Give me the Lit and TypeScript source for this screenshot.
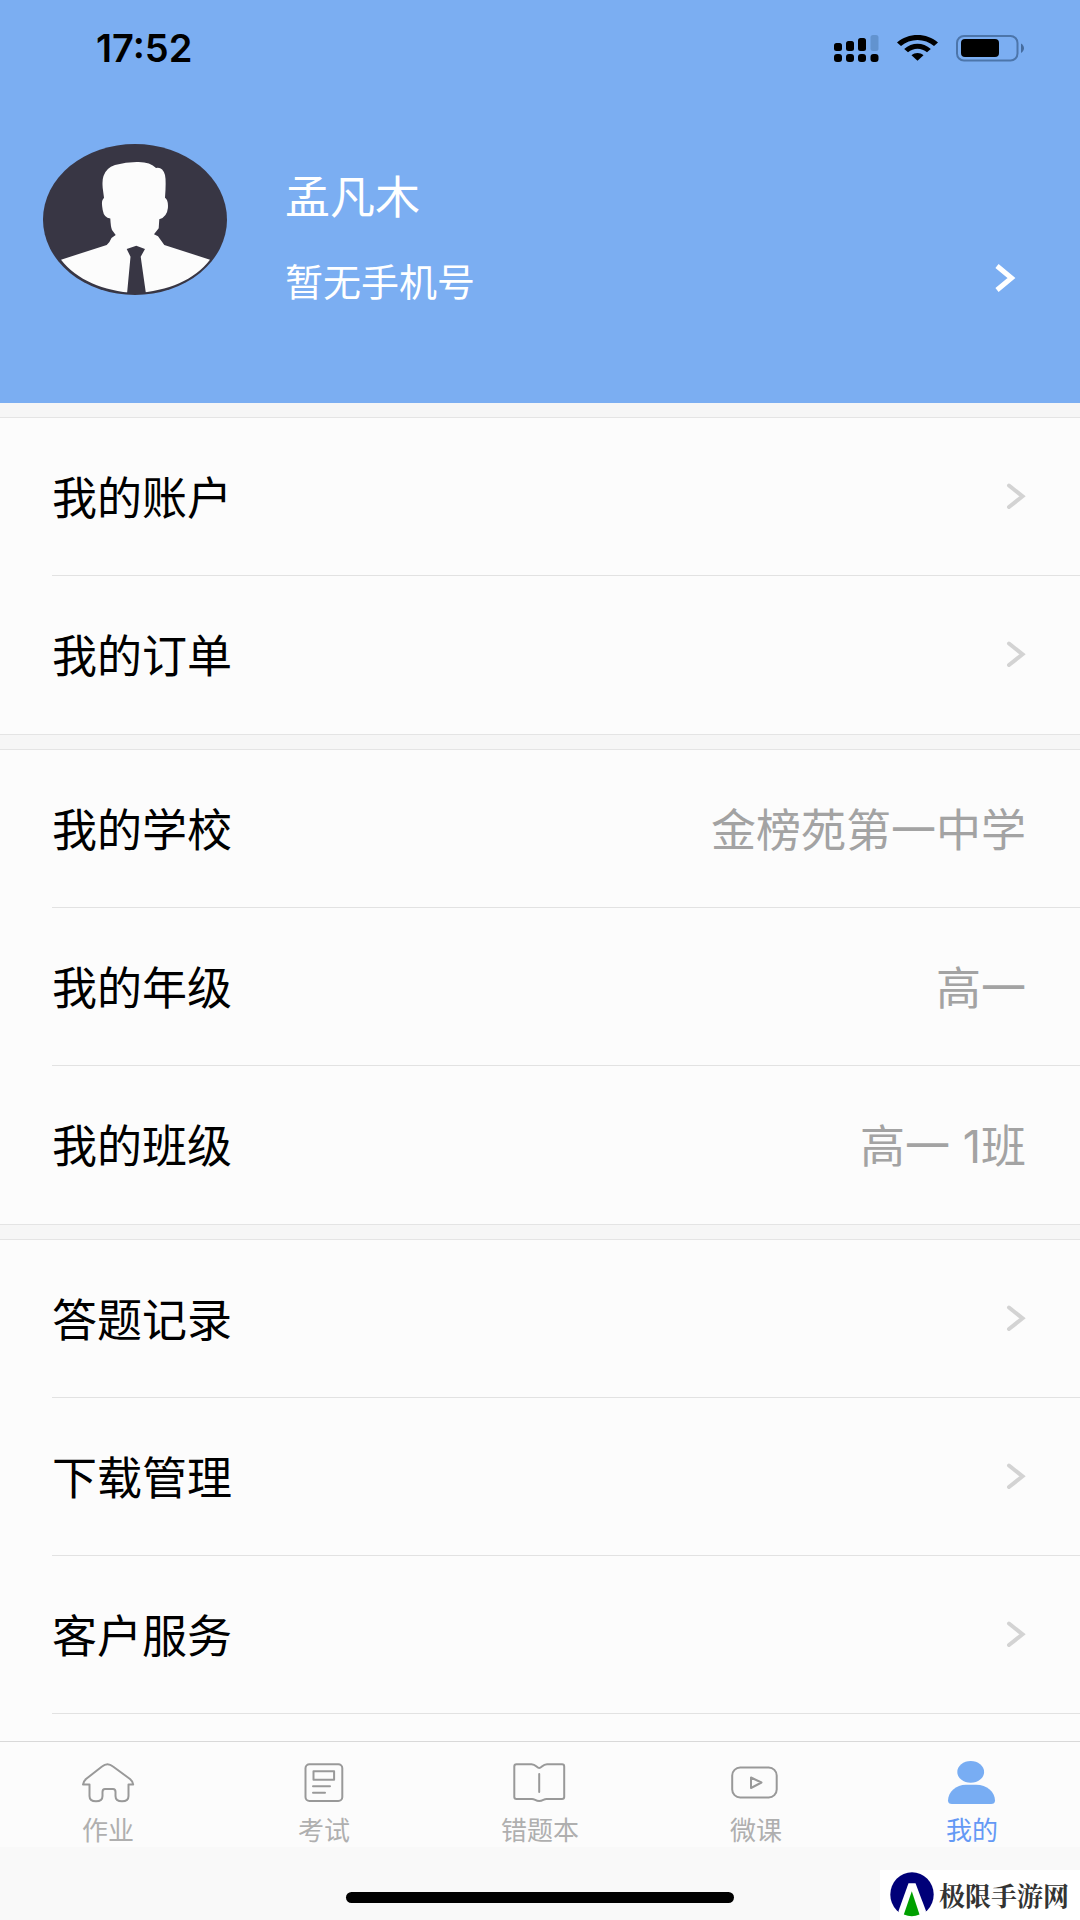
import { LitElement, html, svg, css, nothing } from "lit";
import { customElement } from "lit/decorators.js";
import { classMap } from "lit/directives/class-map.js";

interface Row {
  label: string;
  value?: string;
}

const groups: Row[][] = [
  [{ label: "我的账户" }, { label: "我的订单" }],
  [
    { label: "我的学校", value: "金榜苑第一中学" },
    { label: "我的年级", value: "高一" },
    { label: "我的班级", value: "高一 1班" },
  ],
  [{ label: "答题记录" }, { label: "下载管理" }, { label: "客户服务" }],
];

const tabs = [
  {
    label: "作业",
    icon: svg`<path d="M3 23.5C3 21.300 4 20 6 18L22 5.500Q27.500 1 33 5.500L50 18C52.300 20 53.200 21.300 53.200 23.500H48.500V35Q48.500 40.300 42 40.300Q35.500 40.300 35.500 35V31Q35.500 28 33 28H25Q22.500 28 22.500 31V35Q22.500 40.300 16 40.300Q9.500 40.300 9.500 35V23.500Z"/>`,
  },
  {
    label: "考试",
    icon: svg`<rect x="9.500" y="3.300" width="36.800" height="36.700" rx="4"/><rect x="17.500" y="10.200" width="20.600" height="8.600"/><path d="M17 25.200H34M17 31.700H29"/>`,
  },
  {
    label: "错题本",
    icon: svg`<path d="M4.500 3.300H19.500C24 3.300 24.700 7 27.200 7C29.700 7 30.500 3.300 35 3.300H50Q52.200 3.300 52.200 5.500V36Q52.200 38 50 38H34.500C31.500 38 31 40 27.200 40C23.500 40 23 38 20 38H4.500Q2.300 38 2.300 36V5.500Q2.300 3.300 4.500 3.300ZM27.200 13V31"/>`,
  },
  {
    label: "微课",
    icon: svg`<rect x="4.200" y="6.500" width="44.500" height="30" rx="8"/><path d="M23 16.500V27L33.500 21.500Z"/>`,
  },
  {
    label: "我的",
    active: true,
    icon: svg`<ellipse cx="26.700" cy="10.900" rx="13.400" ry="10.900"/><path d="M22 23.700H32C43 23.700 51 31 51 39.500Q51 43 47 43H8Q4 43 4 39.500C4 31 12 23.700 22 23.700Z"/>`,
  },
];

@customElement("app-root")
export class AppRoot extends LitElement {
  static styles = css`
    :host {
      display: block;
      font-family: "Inter", "Noto Sans CJK SC", sans-serif;
      color: #000;
    }
    .page {
      display: flex;
      flex-direction: column;
      min-height: 100vh;
      background: #f6f6f6;
      position: relative;
    }
    svg {
      display: block;
      flex: none;
    }
    button {
      appearance: none;
      border: 0;
      background: none;
      margin: 0;
      padding: 0;
      font: inherit;
      color: inherit;
      text-align: left;
      cursor: pointer;
    }
    .header {
      background: #7baef2;
      min-height: 403px;
    }
    .status {
      display: flex;
      align-items: center;
      gap: 18px;
      height: 96px;
      padding: 0 56px 0 96px;
    }
    .time {
      flex: 1;
      font-size: 38px;
      line-height: 48px;
      font-weight: 600;
    }
    .profile {
      display: flex;
      align-items: flex-start;
      gap: 58px;
      width: 100%;
      padding: 48px 64px 0 43px;
      color: #fff;
    }
    .info {
      display: flex;
      flex-direction: column;
      flex: 1;
      gap: 32px;
      padding-top: 26px;
    }
    .name {
      font-size: 45px;
      line-height: 56px;
    }
    .contact {
      display: flex;
      justify-content: space-between;
      font-size: 38px;
      line-height: 48px;
    }
    .contact svg {
      margin-top: 6px;
    }
    .list {
      flex: 1;
      display: flex;
      flex-direction: column;
      gap: 14px;
      padding-top: 14px;
    }
    .group {
      background: #fcfcfc;
      border-top: 1px solid #e4e4e4;
      border-bottom: 1px solid #e4e4e4;
    }
    .group:last-child {
      flex: 1;
      border-bottom: 0;
    }
    .row {
      box-sizing: border-box;
      display: flex;
      align-items: center;
      justify-content: space-between;
      width: calc(100% - 52px);
      height: 158px;
      margin-left: 52px;
      padding-right: 54px;
      border-bottom: 1px solid #e2e2e2;
      font-size: 45px;
      line-height: 56px;
    }
    .row span {
      padding-top: 4px;
    }
    .group:not(:last-child) .row:last-child {
      border-bottom: 0;
    }
    .value {
      color: #a3a3a3;
    }
    .tabs {
      display: grid;
      grid-template-columns: repeat(5, 1fr);
      background: #fcfcfc;
      border-top: 1px solid #d9d9d9;
    }
    .tab {
      display: flex;
      flex-direction: column;
      align-items: center;
      gap: 10px;
      padding-top: 19px;
      font-size: 26px;
      line-height: 32px;
      color: #afafaf;
    }
    .tab svg {
      fill: none;
      stroke: #999;
      stroke-width: 2;
      stroke-linejoin: round;
      stroke-linecap: round;
    }
    .active {
      color: #6499f5;
    }
    .active svg {
      fill: #78adf3;
      stroke: none;
    }
    .home {
      display: flex;
      justify-content: center;
      padding: 45px 0 17px;
      background: #f9f9f9;
    }
    .bar {
      width: 36%;
      height: 11px;
      border-radius: 6px;
      background: #000;
    }
    .mark {
      position: absolute;
      right: 0;
      bottom: 0;
      display: flex;
      align-items: center;
      gap: 5px;
      padding: 2px 11px 3px 10px;
      background: #fff;
      color: #333;
      font-family: "Noto Serif CJK SC", "Noto Sans CJK SC", serif;
      font-size: 26px;
      line-height: 44px;
      font-weight: 700;
    }
  `;

  private renderRow(row: Row) {
    if (row.value) {
      return html`<div class="row">
        <span>${row.label}</span><span class="value">${row.value}</span>
      </div>`;
    }
    return html`<button class="row" type="button">
      <span>${row.label}</span>
      <svg width="20" height="28" viewBox="0 0 20 28" aria-hidden="true">
        <path d="M3 2.500L16.500 13.300L3 24" fill="none" stroke="#d3d3d3" stroke-width="4" stroke-linecap="round" />
      </svg>
    </button>`;
  }

  render() {
    return html`<div class="page">
      <header class="header">
        <div class="status">
          <span class="time">17:52</span>
          <svg width="45" height="27" viewBox="0 0 45 27" aria-hidden="true">
            <rect x="0" y="8" width="8" height="8" rx="2.500" />
            <rect x="12" y="6" width="8" height="10" rx="2.500" />
            <rect x="24" y="3" width="8" height="13" rx="2.500" />
            <rect x="36.500" y="0" width="8" height="16" rx="2.500" fill="#6293cf" />
            <rect x="0" y="19" width="8" height="8" rx="3" />
            <rect x="12" y="19" width="8" height="8" rx="3" />
            <rect x="24" y="19" width="8" height="8" rx="3" />
            <rect x="36.500" y="19" width="8" height="8" rx="3" />
          </svg>
          <svg width="41" height="26" viewBox="0 0 41 26" aria-hidden="true">
            <path d="M0 7.500C11-2.500 30-2.500 41 7.500L37 11C28 3 13 3 4 11Z" />
            <path d="M7.200 14C15 7 26 7 33.800 14L30 17.300C24.500 12.500 16.500 12.500 11 17.300Z" />
            <path d="M14.500 20.300C18 17.300 23 17.300 26.500 20.300L20.500 25.800Z" />
          </svg>
          <svg width="68" height="27" viewBox="0 0 68 27" aria-hidden="true">
            <rect x="1" y="1" width="60.500" height="24.500" rx="7" fill="none" stroke="#4c75aa" stroke-width="2" />
            <rect x="5" y="4" width="38" height="18" rx="4" />
            <path d="M65 8.500C69 11 69 15.500 65 18Z" fill="#456c9f" />
          </svg>
        </div>
        <button class="profile" type="button">
          <svg width="184" height="151" viewBox="0 0 184 151" aria-hidden="true">
            <ellipse cx="92" cy="75.500" rx="92" ry="75.500" fill="#383644" />
            <path
              fill="#fcfcfc"
              d="M72.700 91L69 86Q67.700 83 67.300 74.500Q61 74 59.700 66Q58.300 59 59.500 56L61 53.700L59.700 44Q59 36 60.500 32Q63 24 72 21Q83 18 93.700 18Q107 17.500 113 24Q119.500 22.500 122 31Q123.300 37 122 53.700Q125.500 56 124.900 64Q124 73 116.300 75.300L115.700 84.300L111 90.300L115 92.300L121.300 101L167 115.700C151 136 126 147 92 149C60 147 34 136 18 115.700L63.700 101Q67 98 68.500 94Z"
            />
            <path fill="#383644" d="M83.700 105L93.300 101.700L102 105L97.700 112.700L103 150H84L87.500 112.700Z" />
          </svg>
          <span class="info">
            <span class="name">孟凡木</span>
            <span class="contact">
              <span>暂无手机号</span>
              <svg width="22" height="28" viewBox="0 0 22 28" aria-hidden="true">
                <path d="M3 2L17.500 14L3 26" fill="none" stroke="#fff" stroke-width="5" />
              </svg>
            </span>
          </span>
        </button>
      </header>
      <main class="list">
        ${groups.map((g) => html`<section class="group">${g.map((r) => this.renderRow(r))}</section>`)}
      </main>
      <nav class="tabs">
        ${tabs.map(
          (t) => html`<button
            type="button"
            class=${classMap({ tab: true, active: !!t.active })}
            aria-current=${t.active ? "page" : nothing}
          >
            <svg width="56" height="44" viewBox="0 0 56 44" aria-hidden="true">${t.icon}</svg>
            <span>${t.label}</span>
          </button>`
        )}
      </nav>
      <div class="home"><div class="bar"></div></div>
      <div class="mark">
        <svg width="44" height="45" viewBox="0 0 44 45" aria-hidden="true">
          <ellipse cx="22" cy="22.500" rx="21.700" ry="22.300" fill="#000078" />
          <path d="M18.500 11.300H25.500L36 39L34 45H10L8.500 39Z" fill="#fff" />
          <path d="M21.800 19.300L29.500 42.500Q22 46 13.800 42.500Z" fill="#00a000" />
        </svg>
        <span>极限手游网</span>
      </div>
    </div>`;
  }
}
